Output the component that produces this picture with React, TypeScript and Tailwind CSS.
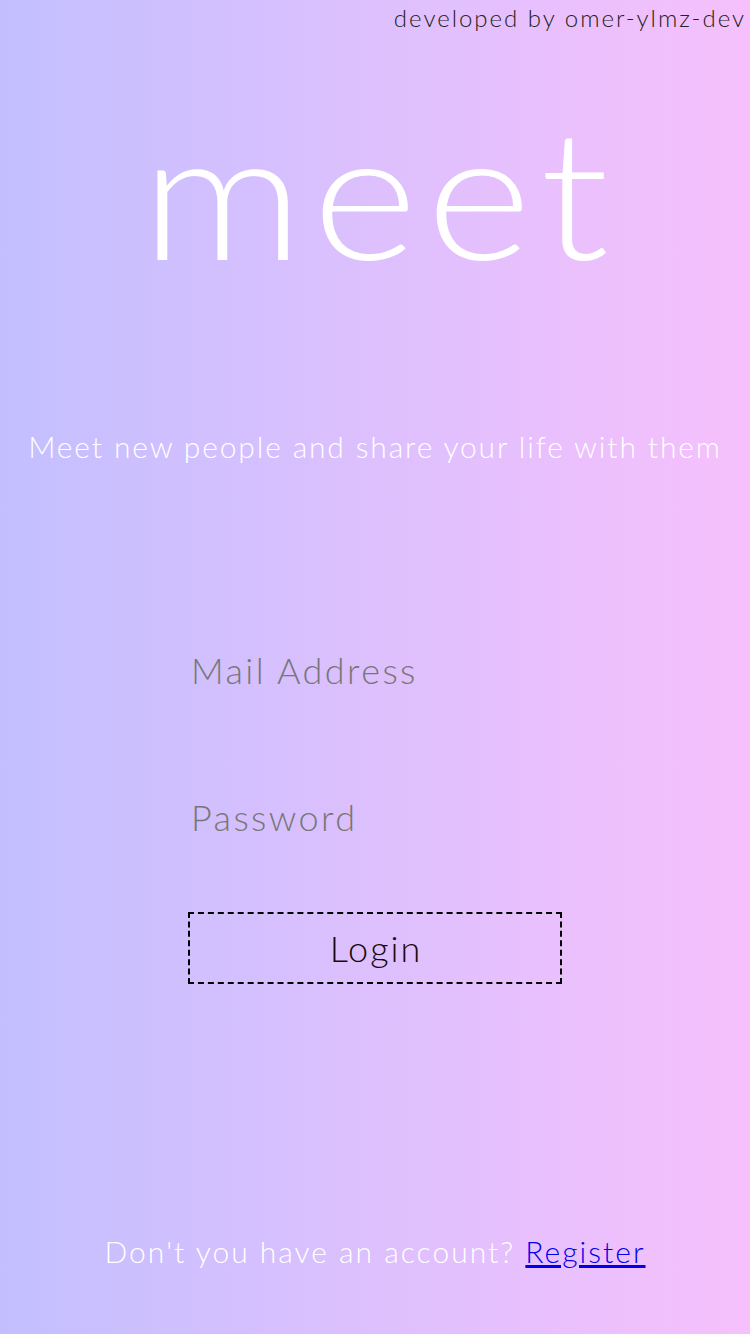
import React from "react";

export default function App() {
  return (
    <div
      className="w-full h-[1334px] bg-gradient-to-r from-[#c3bfff] to-[#f6c0fc] flex flex-col items-center overflow-hidden"
      style={{ fontFamily: "Lato, 'Open Sans', sans-serif" }}
    >
      <div className="self-stretch text-right pr-[4px] text-[24px] leading-[36px] font-light text-[#222] tracking-[2px]">
        developed by omer-ylmz-dev
      </div>
      <h1 className="mt-[64px] h-[180px] pl-[8px] text-[180px] leading-[180px] font-light text-white tracking-[8px] scale-x-[1.12]">
        meet
      </h1>
      <p className="mt-[151px] text-[30px] leading-[30px] font-light text-white tracking-[1.85px]">
        Meet new people and share your life with them
      </p>
      <form className="mt-[184px] w-[374px] flex flex-col">
        <input
          type="email"
          placeholder="Mail Address"
          className="h-[50px] w-full bg-transparent outline-none border-none px-[3px] text-[36px] font-light text-[#333] placeholder:text-[#777] tracking-[2.4px]"
        />
        <input
          type="password"
          placeholder="Password"
          className="mt-[97px] h-[50px] w-full bg-transparent outline-none border-none px-[3px] text-[36px] font-light text-[#333] placeholder:text-[#777] tracking-[2.4px]"
        />
        <button
          type="button"
          className="mt-[70px] h-[72px] w-full border-2 border-dashed border-black pl-[2px] text-[36px] font-light text-[#1a0a0a] tracking-[2px]"
        >
          Login
        </button>
      </form>
      <div className="mt-[247px] text-[30px] leading-[40px] font-light text-white tracking-[2px]">
        Don't you have an account?{" "}
        <a href="#" className="text-[#0000ee] underline">
          Register
        </a>
      </div>
    </div>
  );
}
